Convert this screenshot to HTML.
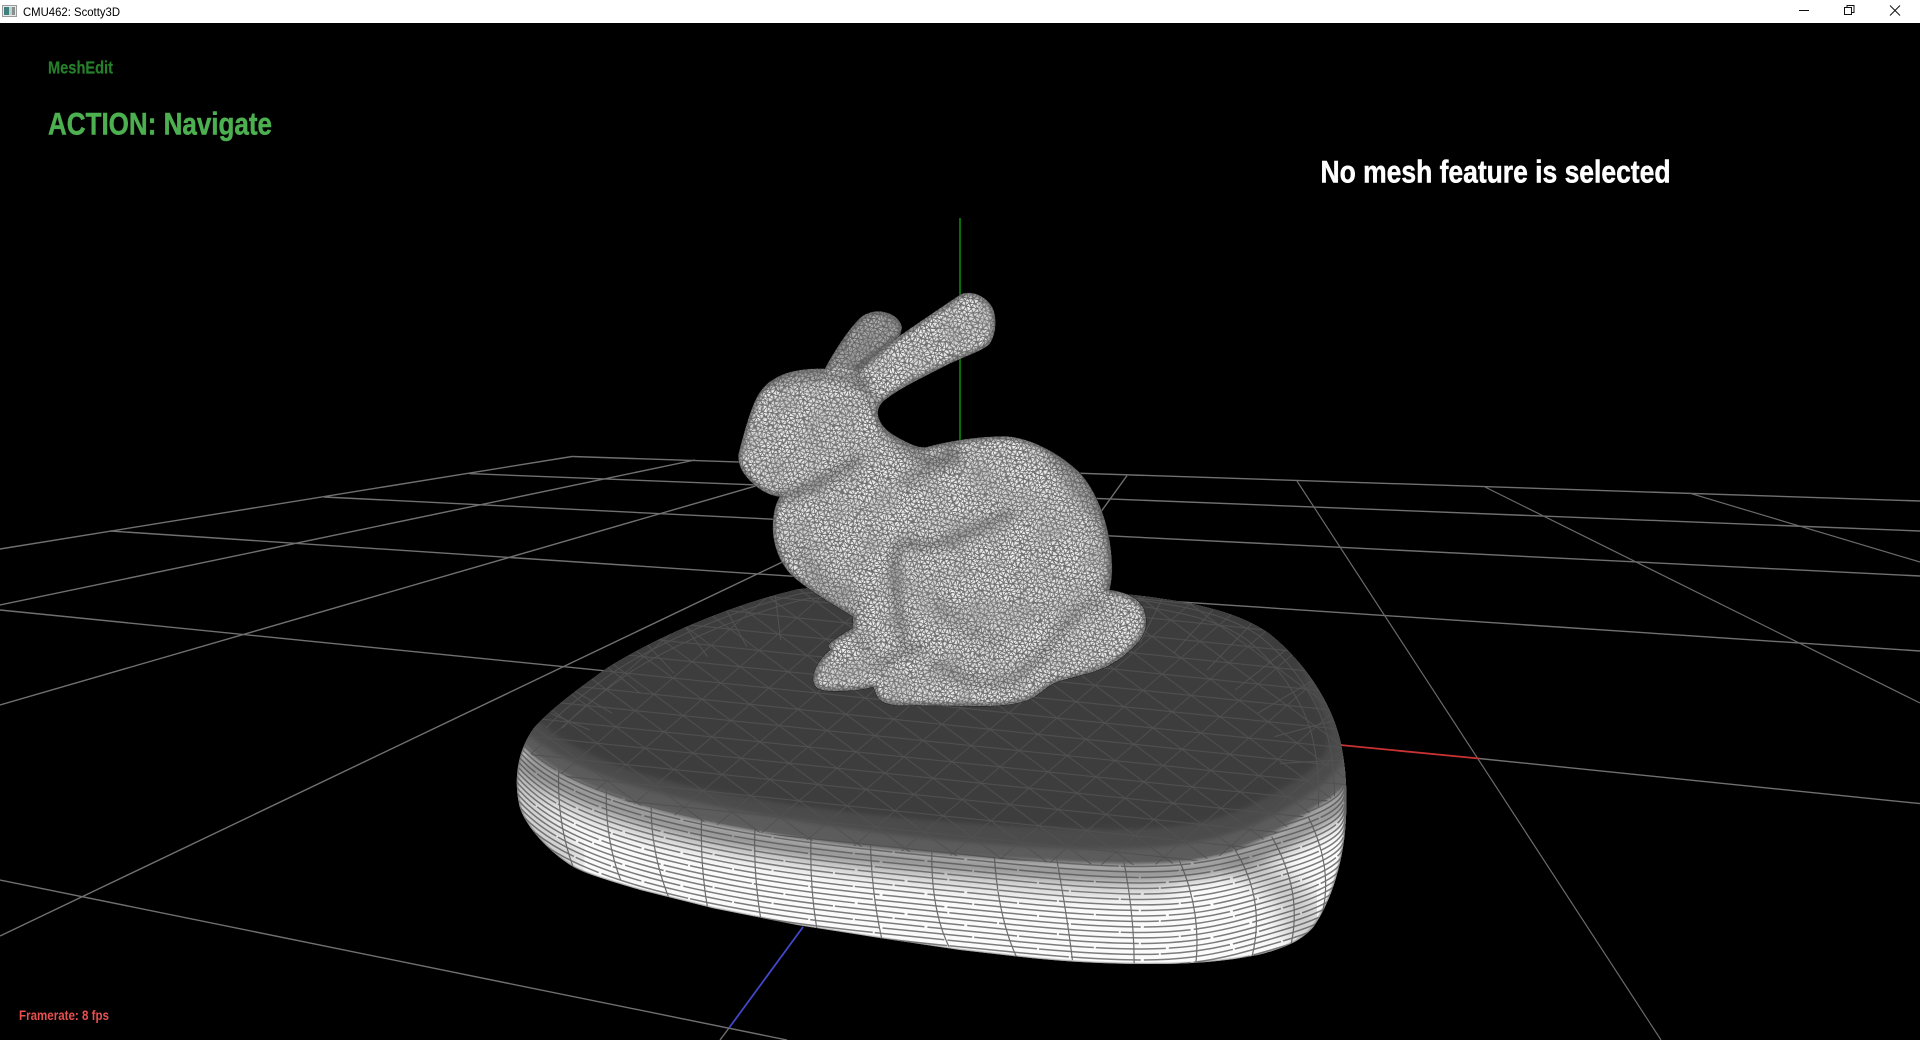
<!DOCTYPE html>
<html><head><meta charset="utf-8"><title>CMU462: Scotty3D</title>
<style>
html,body{margin:0;padding:0;background:#000;width:1920px;height:1040px;overflow:hidden}
svg{display:block;position:absolute;left:0;top:0}
text{font-family:"Liberation Sans",sans-serif;font-weight:bold}
</style></head><body>
<svg width="1920" height="1040" viewBox="0 0 1920 1040" xmlns="http://www.w3.org/2000/svg">
<defs>
<path id="padO" d="M530 28 C560 22 590 20 620 20 L1100 40 C1220 60 1310 90 1370 160 C1430 240 1480 360 1497 480 C1510 580 1511 680 1504 780 C1496 880 1478 970 1450 1040 C1430 1080 1400 1105 1350 1125 C1290 1145 1230 1152 1170 1152 C1090 1153 1020 1147 950 1135 L820 1110 680 1075 530 1035 380 985 250 930 C190 900 150 880 130 860 C90 820 45 740 35 680 C25 610 28 520 60 445 C90 390 120 350 190 265 C270 180 400 80 530 28 Z"/>
<path id="bun" d="M472 298 C540 235 640 170 780 75 C810 60 850 75 872 105 C892 135 890 190 868 222 C845 245 780 262 720 295 C660 325 600 355 560 385 C535 402 528 425 536 445 C546 475 575 495 610 512 C640 528 660 535 680 532 C730 518 830 498 920 500 C1000 505 1090 560 1140 610 C1190 665 1225 760 1233 850 C1237 890 1236 930 1228 960 C1260 965 1310 975 1330 1015 C1345 1050 1338 1090 1315 1115 C1285 1150 1250 1175 1215 1192 C1170 1212 1110 1222 1065 1238 C1040 1250 1020 1270 1000 1282 C970 1300 920 1306 860 1308 C760 1308 660 1306 590 1306 C560 1303 540 1295 530 1275 L520 1250 C480 1262 420 1265 380 1262 C350 1260 338 1245 340 1225 C342 1195 365 1160 392 1140 L385 1125 C405 1105 435 1090 458 1075 L460 1040 C400 1005 310 950 270 910 C240 875 222 830 219 780 C218 740 225 705 240 680 C200 675 165 650 140 620 C118 595 112 565 118 545 C130 500 145 440 165 395 C185 350 215 325 260 310 C300 298 340 296 375 297 C400 250 440 185 480 145 C510 118 560 118 590 145 C600 155 605 165 605 175 L600 195 Z"/>
<clipPath id="padC"><use href="#padO" transform="matrix(.5612 0 0 .3333 500 580)"/></clipPath>
<clipPath id="bunC"><use href="#bun" transform="translate(700 270) scale(.3333)"/></clipPath>
<clipPath id="topC"><path transform="matrix(.5612 0 0 .3333 500 580)" d="M40 500 C100 600 240 690 420 745 S780 830 1020 850 S1320 830 1450 690 S1520 560 1520 420 L1520 0 0 0 0 470 Z"/></clipPath>
<pattern id="tri" patternUnits="userSpaceOnUse" width="100" height="100" patternTransform="matrix(.48 .05 -.19 .163 990 729.3)">
<path d="M0 0H100M0 100H100" stroke="#505050" stroke-width="6" fill="none"/>
<path d="M0 0V100M100 0V100" stroke="#505050" stroke-width="2.500" fill="none"/>
<path d="M0 0L100 100" stroke="#505050" stroke-width="3" fill="none"/>
</pattern>
<pattern id="bm" patternUnits="userSpaceOnUse" width="5.2" height="9" patternTransform="rotate(12)">
<rect width="5.2" height="9" fill="#f0f0f0"/>
<path d="M0 0H5.200M0 4.500H5.200M0 9H5.200M0 0L2.600 4.500L5.200 0M0 9L2.600 4.500L5.200 9" stroke="#6c6c6c" stroke-width=".95" fill="none"/>
</pattern>
<filter id="dis" x="0" y="0" width="100%" height="100%"><feTurbulence type="fractalNoise" baseFrequency=".11" numOctaves="2" seed="4"/><feDisplacementMap in="SourceGraphic" scale="6" xChannelSelector="R" yChannelSelector="G"/></filter>
<filter id="mot" x="0" y="0" width="100%" height="100%"><feTurbulence type="fractalNoise" baseFrequency=".035" numOctaves="3" seed="9"/><feColorMatrix type="matrix" values="0 0 0 0 .28  0 0 0 0 .28  0 0 0 0 .28  2 0 0 0 -.72"/></filter>
<filter id="b1" x="-20%" y="-20%" width="140%" height="140%"><feGaussianBlur stdDeviation="2"/></filter>
<filter id="b6" x="-10%" y="-20%" width="120%" height="140%"><feGaussianBlur stdDeviation="6"/></filter>
<filter id="bR" x="-10%" y="-10%" width="120%" height="120%"><feGaussianBlur stdDeviation="5"/></filter>
<filter id="b2" x="-30%" y="-30%" width="160%" height="160%"><feGaussianBlur stdDeviation="14"/></filter>
<filter id="b3" x="-20%" y="-40%" width="140%" height="180%"><feGaussianBlur stdDeviation="22"/></filter>
<g id="sl6" fill="none" stroke="#7c7c7c" stroke-width="1.500" stroke-dasharray="120 2 70 3 90 2">
<path vector-effect="non-scaling-stroke" d="M20 470 C60 560 130 640 300 710 S600 800 900 850 S1250 875 1400 800 S1490 680 1512 590"/>
<path vector-effect="non-scaling-stroke" stroke-dashoffset="40" transform="translate(0 16.500)" d="M20 470 C60 560 130 640 300 710 S600 800 900 850 S1250 875 1400 800 S1490 680 1512 590"/>
<path vector-effect="non-scaling-stroke" stroke-dashoffset="85" transform="translate(0 33)" d="M20 470 C60 560 130 640 300 710 S600 800 900 850 S1250 875 1400 800 S1490 680 1512 590"/>
<path vector-effect="non-scaling-stroke" stroke-dashoffset="20" transform="translate(0 49.500)" d="M20 470 C60 560 130 640 300 710 S600 800 900 850 S1250 875 1400 800 S1490 680 1512 590"/>
<path vector-effect="non-scaling-stroke" stroke-dashoffset="110" transform="translate(0 66)" d="M20 470 C60 560 130 640 300 710 S600 800 900 850 S1250 875 1400 800 S1490 680 1512 590"/>
<path vector-effect="non-scaling-stroke" stroke-dashoffset="60" transform="translate(0 82.500)" d="M20 470 C60 560 130 640 300 710 S600 800 900 850 S1250 875 1400 800 S1490 680 1512 590"/>
</g>
</defs>

<rect width="1920" height="1040" fill="#000"/>

<!-- grid -->
<g stroke="#707070" stroke-width="1.4" fill="none">
<path d="M572 456.5L1920 501M469 473.6L1920 531M324 497L1920 576M110 531L1920 651"/>
<path d="M0 610L1342 745M1479 758.5L1920 803.6"/>
<path d="M0 880L787 1040"/>
<path d="M572 456.5L0 549M695 460L0 605M828 465L0 705M979 468L0 936"/>
<path d="M1127 475.6L1000 652M729 1028L720 1040"/>
</g>
<g stroke="#6a6a6a" stroke-width="1.2" fill="none">
<path d="M1297 481L1661 1040M1485 487L1920 703M1691 493.6L1920 562"/>
</g>
<path d="M960 218V450" stroke="#0a8a0a" stroke-width="1.6"/>
<path d="M1340 745L1479 758.5" stroke="#c83232" stroke-width="1.8"/>
<path d="M803 927L729 1028" stroke="#4048c8" stroke-width="1.8"/>

<!-- pad side -->
<g clip-path="url(#padC)">
<rect x="500" y="580" width="880" height="400" fill="#fbfbfb"/>
<g transform="matrix(.5612 0 0 .3333 500 580)" fill="none">
<use href="#sl6" y="-297"/><use href="#sl6" y="-198"/><use href="#sl6" y="-99"/><use href="#sl6"/><use href="#sl6" y="99"/><use href="#sl6" y="198"/><use href="#sl6" y="297"/>
<path stroke="#6e6e6e" stroke-width="1.2" vector-effect="non-scaling-stroke" d="M105 560Q100 720 130 860M190 600Q185 770 215 900M270 640Q265 800 300 950M360 680Q355 840 370 985M455 710Q450 870 465 1020M555 740Q550 900 565 1050M660 760Q660 920 680 1075M770 780Q765 980 800 1100M880 800Q885 1000 920 1130M990 820Q1010 1000 1020 1140M1110 830Q1130 1000 1130 1150M1210 840Q1250 990 1240 1150M1310 810Q1365 960 1340 1130M1375 770Q1430 930 1410 1090M1440 710Q1490 880 1460 1030"/>
<path d="M60 600 C120 710 300 790 600 860 S1000 930 1200 930" stroke="#808080" stroke-width="46" opacity=".3" filter="url(#b3)"/>
<path d="M1310 850 C1400 900 1440 980 1430 1080" stroke="#555" stroke-width="70" opacity=".3" filter="url(#b3)"/>
<path d="M30 560 C30 680 70 780 130 860" stroke="#555" stroke-width="60" opacity=".3" filter="url(#b3)"/>
<path d="M25 520 C100 625 240 715 420 770 S780 855 1020 875 S1330 855 1460 715 S1510 600 1518 520" stroke="#505050" stroke-width="44" opacity=".8" filter="url(#b3)"/>
<use href="#padO" stroke="#6a6a6a" stroke-width="4" style="vector-effect:non-scaling-stroke" filter="url(#b1)"/>
</g>
</g>

<!-- pad top -->
<g clip-path="url(#padC)">
<g transform="matrix(.5612 0 0 .3333 500 580)">
<path fill="#5c5c5c" filter="url(#b6)" d="M40 500 C100 600 240 690 420 745 S780 830 1020 850 S1320 830 1450 690 S1520 560 1520 420 L1520 0 0 0 0 470 Z"/>
<path fill="#4c4c4c" filter="url(#b6)" d="M55 470 C130 570 260 640 420 690 S780 790 1000 805 S1320 775 1435 650 S1500 450 1500 350 L1500 0 1100 0 0 0 0 440 Z"/>
<path fill="#3e3e3e" filter="url(#b6)" d="M75 430 C130 520 240 590 400 640 S760 730 1000 745 S1300 720 1410 610 S1470 420 1440 320 L1400 100 1100 0 0 0 0 400 Z"/>
</g>
<g clip-path="url(#topC)">
<rect x="500" y="580" width="880" height="400" fill="url(#tri)"/>
<g transform="matrix(.5612 0 0 .3333 500 580)" fill="none" stroke="#525252" stroke-width="1">
<path vector-effect="non-scaling-stroke" transform="translate(800 420) scale(.97) translate(-800 -420)" d="M60 445 C90 390 120 350 190 265 C270 180 400 80 530 28 L620 20 1100 40 C1220 60 1310 90 1370 160 C1430 240 1480 360 1497 480 C1510 580 1511 680 1504 780"/>
<path vector-effect="non-scaling-stroke" transform="translate(800 420) scale(.93) translate(-800 -420)" d="M60 445 C90 390 120 350 190 265 C270 180 400 80 530 28 L620 20 1100 40 C1220 60 1310 90 1370 160 C1430 240 1480 360 1497 480 C1510 580 1511 680 1504 780"/>
<path vector-effect="non-scaling-stroke" d="M440 200L400 80M370 230L330 140M310 280L260 190M250 340L190 260M200 400L130 330M160 450L90 400M500 180L490 40M1140 190L1180 55M1200 220L1270 90M1260 270L1340 130M1310 330L1400 210M1350 400L1450 300M1380 470L1490 420M1390 550L1500 540"/>
</g>
</g>
</g>

<!-- bunny -->
<g transform="translate(700 270) scale(.3333)">
<use href="#bun" fill="#888" stroke="#1a1a1a" stroke-width="3"/>
</g>
<g clip-path="url(#bunC)">
<rect x="690" y="260" width="500" height="470" fill="url(#bm)" filter="url(#dis)"/>
<rect x="690" y="260" width="500" height="470" filter="url(#mot)" opacity=".5"/>
<g transform="translate(700 270) scale(.3333)" fill="none" stroke="#565656" stroke-linecap="round" stroke-linejoin="round">
<use href="#bun" stroke-width="20" opacity=".7" filter="url(#bR)"/>
<path d="M380 297 440 195 480 145 530 122 575 130 605 165 600 195 470 300Z" fill="#555" stroke="none" opacity=".4" filter="url(#b1)"/>
<path d="M470 300Q490 360 530 400" stroke-width="26" opacity=".55" filter="url(#b2)"/>
<path d="M240 680Q300 670 380 625T470 570" stroke-width="30" opacity=".6" filter="url(#b2)"/>
<path d="M610 1120Q590 1000 585 900T640 820 800 790 930 730" stroke-width="24" opacity=".6" filter="url(#b2)"/>
<path d="M530 1190Q590 1150 660 1130" stroke-width="22" opacity=".5" filter="url(#b2)"/>
<path d="M700 1180Q780 1230 870 1240T1060 1110 1210 1010" stroke-width="24" opacity=".45" filter="url(#b2)"/>
<path d="M460 1040Q470 1110 510 1150" stroke-width="20" opacity=".35" filter="url(#b2)"/>
<path d="M540 420Q580 520 660 560T760 530" stroke-width="34" opacity=".5" filter="url(#b2)"/>
<path d="M620 640Q700 580 780 560" stroke-width="40" opacity=".3" filter="url(#b2)"/>
<path d="M1060 560Q1180 680 1225 800T1225 950" stroke-width="44" opacity=".45" filter="url(#b2)"/>
<path d="M200 345Q300 305 440 320 470 330 480 350" stroke-width="34" opacity=".5" filter="url(#b2)"/>
<path d="M720 1000Q760 1080 900 1110" stroke-width="40" opacity=".22" filter="url(#b2)"/>
<path d="M300 850Q380 950 470 1010" stroke-width="50" opacity=".2" filter="url(#b2)"/>
</g>
</g>

<!-- title bar -->
<rect width="1920" height="23" fill="#fff"/>
<g>
<rect x="2.5" y="5.5" width="14" height="11" fill="#e8e8e8" stroke="#9a9a9a"/>
<rect x="4" y="7" width="5" height="8" fill="#3f7f80"/>
<rect x="9" y="7" width="3" height="8" fill="#b9d4cc"/>
<rect x="12" y="7" width="3" height="8" fill="#8a8f90"/>
</g>
<text x="23" y="16" font-size="12" textLength="97" lengthAdjust="spacingAndGlyphs" style="font-weight:normal" fill="#000">CMU462: Scotty3D</text>
<path d="M1799 10.5H1809" stroke="#111" stroke-width="1"/>
<path d="M1844.5 7.5h7v7h-7zM1847 7V5.500h7v7h-2" stroke="#111" stroke-width="1" fill="none"/>
<path d="M1890 5.500L1900 15.500M1900 5.500L1890 15.500" stroke="#111" stroke-width="1" fill="none"/>

<!-- overlay text -->
<text x="48" y="73.500" font-size="17.5" textLength="65" lengthAdjust="spacingAndGlyphs" fill="#267f2a" stroke="#267f2a" stroke-width=".2">MeshEdit</text>
<text x="48" y="134.500" font-size="31.500" textLength="224" lengthAdjust="spacingAndGlyphs" fill="#4caf50" stroke="#4caf50" stroke-width=".5">ACTION: Navigate</text>
<text x="1320.5" y="182.500" font-size="31.500" textLength="350" lengthAdjust="spacingAndGlyphs" fill="#fff" stroke="#fff" stroke-width=".5">No mesh feature is selected</text>
<text x="19" y="1020" font-size="13.500" textLength="90" lengthAdjust="spacingAndGlyphs" fill="#e85050">Framerate: 8 fps</text>
</svg>
</body></html>
